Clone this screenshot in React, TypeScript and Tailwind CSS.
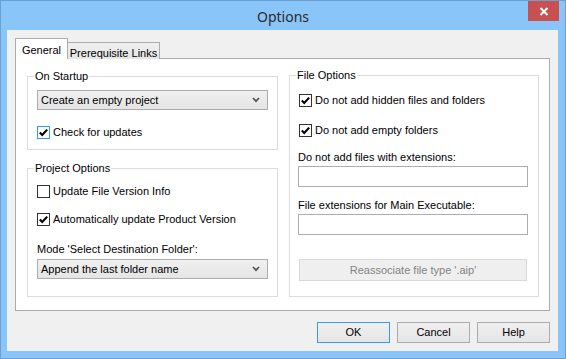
import React from "react";

const font = "font-['Liberation_Sans',Arial,sans-serif]";

function Check({ checked, focused }: { checked: boolean; focused?: boolean }) {
  return (
    <div
      className={`w-[13px] h-[13px] border bg-white flex items-center justify-center shrink-0 ${
        focused ? "border-[#3399ff]" : "border-[#333333]"
      }`}
    >
      {checked && (
        <svg width="11" height="11" viewBox="0 0 11 11">
          <path d="M1.8 5.6 L4.2 8 L9.2 2.6" stroke="#000" strokeWidth="2.1" fill="none" />
        </svg>
      )}
    </div>
  );
}

function CheckRow({ label, checked, focused, className = "" }: { label: string; checked: boolean; focused?: boolean; className?: string }) {
  return (
    <div className={`flex items-center gap-[3px] h-[13px] ${className}`}>
      <Check checked={checked} focused={focused} />
      <span className="leading-[13px]">{label}</span>
    </div>
  );
}

function Combo({ value, className = "" }: { value: string; className?: string }) {
  return (
    <div
      className={`h-[20px] w-[231px] border border-[#acacac] bg-gradient-to-b from-[#f0f0f0] to-[#e5e5e5] flex items-center pl-[3px] pr-[7px] ${className}`}
    >
      <span className="flex-1 leading-[13px]">{value}</span>
      <svg width="8" height="6" viewBox="0 0 8 6">
        <path d="M1 1 L4 4.2 L7 1" stroke="#555" strokeWidth="1.7" fill="none" />
      </svg>
    </div>
  );
}

function Group({ label, className = "", children }: { label: string; className?: string; children: React.ReactNode }) {
  return (
    <div className={`relative border border-[#dcdcdc] ${className}`}>
      <span className="absolute left-[6px] top-[-7px] px-[1px] bg-white leading-[13px]">{label}</span>
      {children}
    </div>
  );
}

function Btn({ label, primary }: { label: string; primary?: boolean }) {
  return (
    <div
      className={`w-[73px] h-[21px] border flex items-center justify-center bg-gradient-to-b from-[#f0f0f0] to-[#e5e5e5] ${
        primary ? "border-[#3399ff]" : "border-[#acacac]"
      }`}
    >
      {label}
    </div>
  );
}

export default function App() {
  return (
    <div className={`w-[566px] h-[359px] bg-[#89c5f8] border border-[#6c9fd4] flex flex-col text-[11px] text-black ${font}`}>
      <div className="h-[29px] relative flex items-center justify-center">
        <span className="font-['Noto_Sans',sans-serif] text-[14px] text-[#2b2b2b] mt-[2px]">Options</span>
        <div className="absolute right-[6px] top-0 w-[31px] h-[20px] bg-[#c75050] flex items-center justify-center">
          <svg width="10" height="9" viewBox="0 0 10 9">
            <path d="M1.5 1 L8.5 8 M8.5 1 L1.5 8" stroke="#fff" strokeWidth="2" />
          </svg>
        </div>
      </div>
      <div className="ml-[6px] w-[551px] h-[321px] bg-[#f0f0f0] pt-[8px] pl-[8px] flex flex-col">
        <div className="flex items-end h-[21px] relative z-10">
          <div className="w-[53px] h-[21px] border border-b-0 border-[#acacac] bg-white flex items-start justify-center pt-[3px]">
            General
          </div>
          <div className="w-[92px] h-[17px] border border-l-0 border-[#acacac] border-b-0 bg-gradient-to-b from-[#f0f0f0] to-[#e5e5e5] flex items-start justify-center pt-[2px]">
            Prerequisite Links
          </div>
        </div>
        <div className="w-[535px] h-[253px] border border-[#acacac] bg-white mt-[-1px] flex pl-[11px] pt-[17px] gap-[11px]">
          <div className="flex flex-col w-[251px]">
            <Group label="On Startup" className="h-[74px] pl-[9px] pt-[13px]">
              <Combo value="Create an empty project" />
              <CheckRow label="Check for updates" checked focused className="mt-[16px]" />
            </Group>
            <Group label="Project Options" className="h-[129px] mt-[18px] pl-[9px] pt-[16px]">
              <CheckRow label="Update File Version Info" checked={false} />
              <CheckRow label="Automatically update Product Version" checked className="mt-[15px]" />
              <div className="mt-[17px] leading-[13px]">Mode 'Select Destination Folder':</div>
              <Combo value="Append the last folder name" className="mt-[3px]" />
            </Group>
          </div>
          <Group label="File Options" className="w-[250px] h-[222px] mt-[-1px] pl-[9px] pt-[18px]">
            <CheckRow label="Do not add hidden files and folders" checked />
            <CheckRow label="Do not add empty folders" checked className="mt-[17px]" />
            <div className="mt-[14px] leading-[13px] ml-[-1px]">Do not add files with extensions:</div>
            <div className="mt-[2px] ml-[-1px] w-[230px] h-[21px] border border-[#abadb3] bg-white" />
            <div className="mt-[12px] leading-[13px] ml-[-1px]">File extensions for Main Executable:</div>
            <div className="mt-[2px] ml-[-1px] w-[230px] h-[21px] border border-[#abadb3] bg-white" />
            <div className="mt-[24px] w-[228px] h-[22px] border border-[#d9d9d9] bg-[#efefef] flex items-center justify-center text-[#838383]">
              Reassociate file type '.aip'
            </div>
          </Group>
        </div>
        <div className="flex justify-end gap-[7px] w-[535px] mt-[11px]">
          <Btn label="OK" primary />
          <Btn label="Cancel" />
          <Btn label="Help" />
        </div>
      </div>
    </div>
  );
}
